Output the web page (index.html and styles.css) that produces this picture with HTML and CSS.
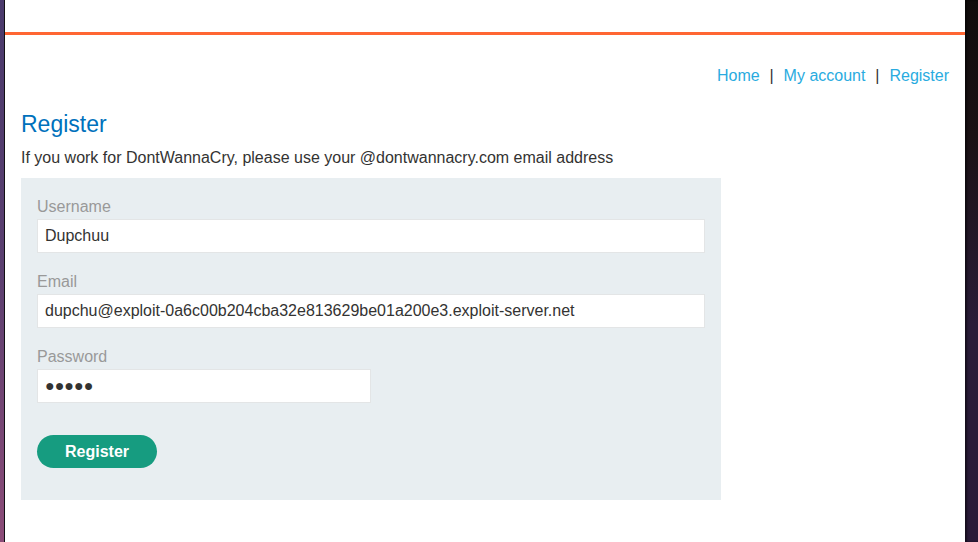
FILE: index.html
```html
<!DOCTYPE html>
<html>
<head>
<meta charset="utf-8">
<link rel="stylesheet" href="styles.css">
</head>
<body>
<div class="frame">
  <div class="edge-left"></div>
  <div class="page">
    <header class="topbar"></header>
    <nav class="nav">
      <a href="#">Home</a><span class="sep">|</span><a href="#">My account</a><span class="sep">|</span><a href="#">Register</a>
    </nav>
    <main class="content">
      <h1 class="title">Register</h1>
      <p class="note">If you work for DontWannaCry, please use your @dontwannacry.com email address</p>
      <form class="form">
        <label class="label">Username</label>
        <input class="input" type="text" value="Dupchuu">
        <label class="label">Email</label>
        <input class="input" type="text" value="dupchu@exploit-0a6c00b204cba32e813629be01a200e3.exploit-server.net">
        <label class="label">Password</label>
        <input class="input half" type="text" value="●●●●●">
        <button class="button" type="button">Register</button>
      </form>
    </main>
  </div>
  <div class="edge-right"></div>
</div>
</body>
</html>
```
FILE: styles.css
```css
html, body {
  margin: 0;
  padding: 0;
  height: 100%;
  overflow: hidden;
}
body {
  font-family: "Liberation Sans", Arial, sans-serif;
  font-size: 16px;
  color: #333332;
  background: #1a1220;
}
.frame {
  display: flex;
  height: 542px;
}
.edge-left {
  width: 4px;
  flex: none;
  background: linear-gradient(to bottom, #4a3a6c 0%, #5b3f70 50%, #8c4c78 100%);
  border-right: 1px solid #121014;
}
.page {
  width: 960px;
  flex: none;
  background: #ffffff;
}
.edge-right {
  flex: 1;
  background: linear-gradient(to bottom, #100c0b 0%, #1a1114 25%, #2a1c38 60%, #2a1a38 100%);
  box-shadow: inset 2px 0 2px rgba(0,0,0,0.5);
}
.topbar {
  height: 32px;
  border-bottom: 3px solid #ff6633;
}
.nav {
  padding: 31px 16px 0 0;
  text-align: right;
  line-height: 20px;
}
.nav a {
  color: #29abe0;
  text-decoration: none;
}
.sep {
  display: inline-block;
  width: 24px;
  text-align: center;
  color: #333332;
}
.content {
  padding: 0 16px;
}
.title {
  margin: 24px 0 0;
  font-size: 23px;
  font-weight: normal;
  line-height: 28px;
  color: #0071bc;
}
.note {
  margin: 11px 0 0;
  line-height: 18px;
}
.form {
  margin-top: 11px;
  width: 668px;
  padding: 20px 16px 32px;
  background: #e8eef1;
  display: flex;
  flex-direction: column;
  align-items: flex-start;
}
.label {
  display: block;
  line-height: 18px;
  color: #999999;
}
.input {
  box-sizing: border-box;
  margin: 3px 0 20px;
  width: 668px;
  height: 34px;
  padding: 0 7px;
  border: 1px solid #e3e5e6;
  background: #ffffff;
  font-family: "Liberation Sans", Arial, sans-serif;
  font-size: 16px;
  color: #333332;
  outline: none;
}
.input.half {
  width: 334px;
  margin-bottom: 32px;
}
.button {
  width: 120px;
  height: 33px;
  border: none;
  border-radius: 17px;
  background: #169c80;
  color: #ffffff;
  font-family: "Liberation Sans", Arial, sans-serif;
  font-size: 16px;
  font-weight: bold;
  padding: 0;
}
```
